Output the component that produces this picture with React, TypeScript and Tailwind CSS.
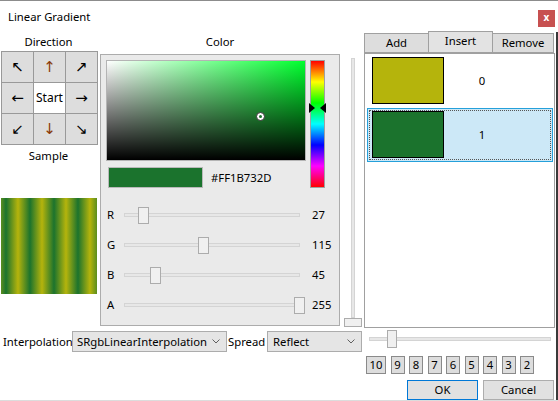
import React from "react";

const DIRS: { t: string; c?: string; start?: boolean }[] = [
  { t: "↖" },
  { t: "↑", c: "text-[#8a3a06]" },
  { t: "↗" },
  { t: "←" },
  { t: "Start", start: true },
  { t: "→" },
  { t: "↙" },
  { t: "↓", c: "text-[#8a3a06]" },
  { t: "↘" },
];

const SLIDERS = [
  { l: "R", v: 27 },
  { l: "G", v: 115 },
  { l: "B", v: 45 },
  { l: "A", v: 255 },
];

const NUMS = ["10", "9", "8", "7", "6", "5", "4", "3", "2"];

function Chevron() {
  return (
    <svg width="8" height="5" viewBox="0 0 8 5" className="shrink-0">
      <polyline points="0.5,0.5 4,4 7.5,0.5" fill="none" stroke="#606060" strokeWidth="1" />
    </svg>
  );
}

export default function App() {
  return (
    <div className="w-[558px] h-[401px] bg-white relative overflow-hidden border-t border-b border-t-[#8c8c8c] border-b-[#dcdcdc] font-['Noto_Sans',sans-serif] text-[11.3px] leading-none text-black">
      {/* title bar */}
      <div className="h-[30px] flex items-center justify-between">
        <span className="ml-[8px] mt-[1px]">Linear Gradient</span>
        <div className="mr-[3px] mt-[4px] w-[17px] h-[17px] bg-[#c75050] text-white text-[10px] font-bold flex items-center justify-center">
          <span className="-mt-[2px]">x</span>
        </div>
      </div>

      {/* body */}
      <div className="flex h-[369px]">
        {/* left part */}
        <div className="w-[364px] flex flex-col">
          <div className="h-[297px] flex">
            {/* direction / sample */}
            <div className="w-[100px] flex flex-col">
              <div className="mt-[3px] h-[16px] w-[97px] flex items-center justify-center">Direction</div>
              <div className="mt-[1px] ml-[1px] w-[97px] grid grid-cols-[repeat(3,32px)] border-l border-t border-[#999999]">
                {DIRS.map((d, i) => (
                  <div
                    key={i}
                    className={`h-[31px] border-r border-b border-[#999999] flex items-center justify-center ${
                      d.start ? "bg-white text-[12px]" : "bg-[#dddddd] font-['DejaVu_Sans',sans-serif] text-[15px]"
                    } ${d.c ?? ""}`}
                  >
                    {d.t}
                  </div>
                ))}
              </div>
              <div className="mt-[3px] h-[16px] w-[97px] flex items-center justify-center">Sample</div>
              <div className="mt-[34px] ml-[1px] w-[96px] h-[96px] bg-[repeating-linear-gradient(90deg,#1b732d_5px,#b5b40c_17px,#1b732d_29px)]" />
            </div>

            {/* color */}
            <div className="w-[240px] flex flex-col">
              <div className="mt-[3px] h-[16px] flex items-center justify-center">Color</div>
              <div className="mt-[4px] h-[272px] w-[240px] border border-[#acacac] bg-[#eaeaea] pl-[5px] pt-[5px]">
                <div className="flex">
                  <div>
                    <div className="relative w-[200px] h-[101px] border border-[#b4b4b4] bg-[linear-gradient(to_top,#000,rgba(0,0,0,0)),linear-gradient(to_right,#fff,#00ff2e)]">
                      <div className="absolute left-[149px] top-[51px] w-[9px] h-[9px] rounded-full border border-[#333] bg-white flex items-center justify-center">
                        <div className="w-[3px] h-[3px] rounded-full bg-[#1b732d]" />
                      </div>
                    </div>
                    <div className="flex items-center mt-[6px]">
                      <div className="ml-[2px] w-[95px] h-[21px] bg-[#1b732d] border border-[#b9b9b9]" />
                      <span className="ml-[8px]">#FF1B732D</span>
                    </div>
                  </div>
                  <div className="relative ml-[4px] w-[15px] h-[128px] border border-[#a0a0a0] bg-[linear-gradient(to_bottom,#f00,#ff0,#0f0,#0ff,#00f,#f0f,#f00)]">
                    <svg width="7" height="10" className="absolute -left-[2px] top-[42px]">
                      <polygon points="0,0 6,5 0,10" fill="#000" />
                    </svg>
                    <svg width="7" height="10" className="absolute left-[8px] top-[42px]">
                      <polygon points="7,0 1,5 7,10" fill="#000" />
                    </svg>
                  </div>
                </div>
                <div className="mt-[12px]">
                  {SLIDERS.map((s) => (
                    <div key={s.l} className="h-[30px] flex items-center">
                      <span className="ml-[1px] w-[17px]">{s.l}</span>
                      <div className="relative w-[176px] h-[17px] flex items-center">
                        <div className="w-full h-[4px] bg-[#e7e7e7] border border-[#d4d4d4]" />
                        <div
                          className="absolute top-0 w-[11px] h-[17px] bg-[#f0f0f0] border border-[#acacac]"
                          style={{ left: `${s.v * 0.684 - 4.5}px` }}
                        />
                      </div>
                      <span className="ml-[12px]">{s.v}</span>
                    </div>
                  ))}
                </div>
              </div>
            </div>

            {/* vertical slider */}
            <div className="ml-[4px] w-[18px] pt-[27px] flex flex-col">
              <div className="ml-[7px] w-[4px] h-[260px] bg-[#e7e7e7] border border-[#d4d4d4]" />
              <div className="w-[18px] h-[9px] bg-[#f0f0f0] border border-[#acacac]" />
            </div>
          </div>

          {/* interpolation row */}
          <div className="mt-[3px] h-[21px] flex items-center">
            <span className="ml-[3px] w-[69px]">Interpolation</span>
            <div className="w-[155px] h-[21px] border border-[#acacac] bg-[#e5e5e5] pl-[4px] pr-[6px] flex items-center justify-between">
              <span>SRgbLinearInterpolation</span>
              <Chevron />
            </div>
            <span className="w-[40px] pl-[1px]">Spread</span>
            <div className="w-[95px] h-[21px] border border-[#acacac] bg-[#e5e5e5] pl-[5px] pr-[6px] flex items-center justify-between">
              <span>Reflect</span>
              <Chevron />
            </div>
          </div>
        </div>

        {/* right part */}
        <div className="w-[191px] flex flex-col">
          <div className="h-[22px] flex items-end">
            <div className="w-[65px] h-[20px] border border-[#a0a0a0] bg-[#dddddd] flex items-center justify-center">Add</div>
            <div className="-ml-px w-[65px] h-[22px] border border-[#a0a0a0] bg-[#e3e3e3] flex items-center justify-center pb-[2px]">Insert</div>
            <div className="-ml-px w-[62px] h-[20px] border border-[#a0a0a0] bg-[#dddddd] flex items-center justify-center">Remove</div>
          </div>
          <div className="h-[275px] w-[191px] border border-[#a0a0a0] bg-white pl-[2px]">
            <div className="w-[186px] h-[54px] border border-transparent flex">
              <div className="ml-[4px] mt-[2px] w-[72px] h-[47px] bg-[#b5b40c] border border-black" />
              <div className="w-[76px] flex items-center justify-center">0</div>
            </div>
            <div className="relative w-[186px] h-[54px] border border-[#26a0da] bg-[#cce8f7] flex">
              <div className="absolute inset-[1px] border border-dotted border-[#555555]" />
              <div className="ml-[4px] mt-[2px] w-[72px] h-[47px] bg-[#1b732d] border border-black" />
              <div className="w-[76px] flex items-center justify-center">1</div>
            </div>
          </div>
          <div className="mt-[2px] h-[18px] relative flex items-center">
            <div className="ml-[5px] w-[182px] h-[4px] bg-[#e7e7e7] border border-[#d4d4d4]" />
            <div className="absolute left-[23px] top-0 w-[10px] h-[18px] bg-[#f0f0f0] border border-[#acacac]" />
          </div>
          <div className="mt-[8px] h-[18px] pl-[2px] flex gap-[4.5px]">
            {NUMS.map((n) => (
              <div
                key={n}
                className={`${n === "10" ? "w-[20px]" : "w-[14px]"} h-[18px] border border-[#8a8a8a] bg-[#dddddd] flex items-center justify-center`}
              >
                {n}
              </div>
            ))}
          </div>
          <div className="mt-[6px] pl-[43px] flex gap-[5px]">
            <div className="w-[71px] h-[20px] border border-[#0078d7] bg-[#e1e1e1] flex items-center justify-center">OK</div>
            <div className="w-[71px] h-[20px] border border-[#adadad] bg-[#e1e1e1] flex items-center justify-center">Cancel</div>
          </div>
        </div>

        <div className="ml-[1px] mt-[1px] w-[2px] bg-[#3a3a3a]" />
      </div>
    </div>
  );
}
